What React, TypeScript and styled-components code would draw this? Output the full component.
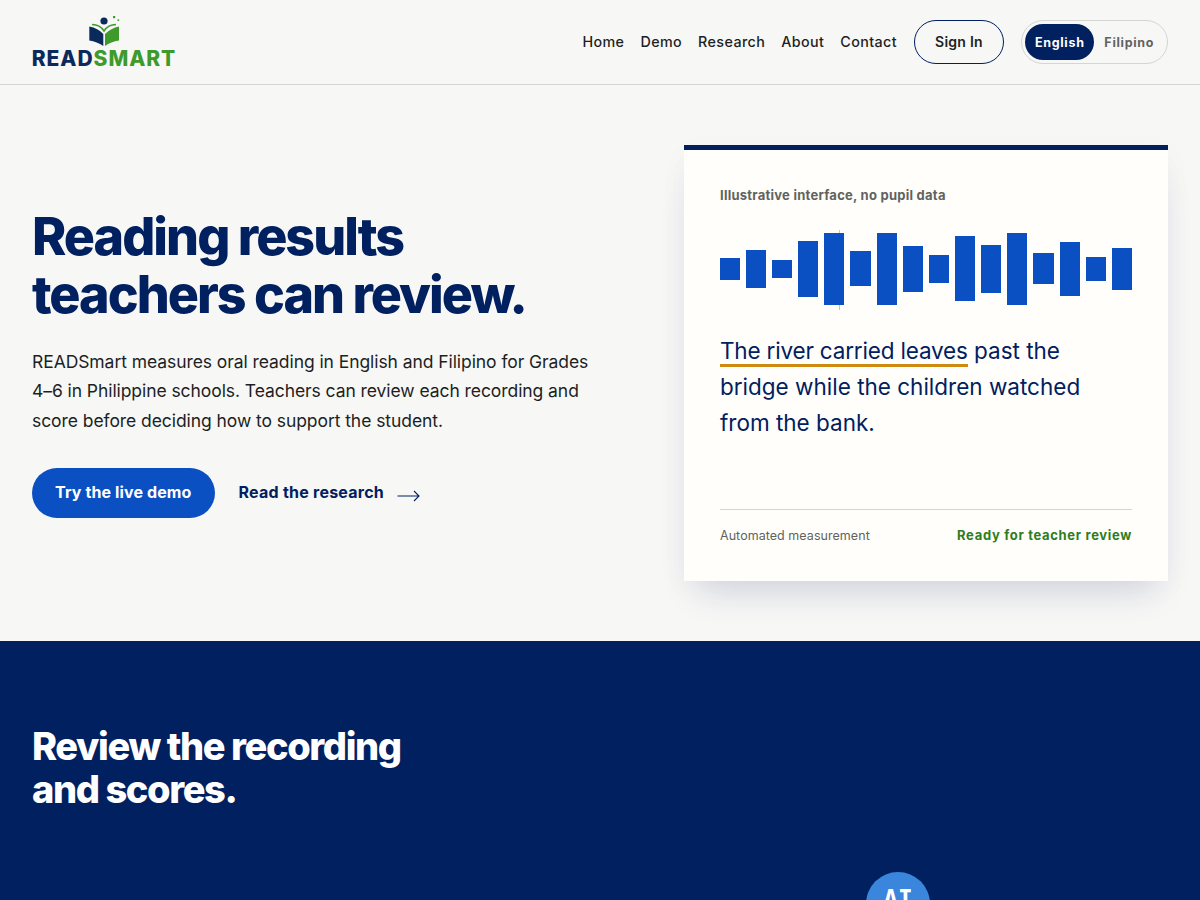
import styled, { createGlobalStyle } from "styled-components";

const GlobalStyle = createGlobalStyle`
  html, body {
    margin: 0;
    padding: 0;
    background: #f7f7f6;
    overflow: hidden;
  }
  * {
    box-sizing: border-box;
  }
  body {
    font-family: Inter, "Liberation Sans", sans-serif;
    color: #1c1f24;
  }
`;

const Page = styled.div`
  width: 1200px;
  height: 900px;
  overflow: hidden;
`;

const Header = styled.header`
  height: 85px;
  padding: 0 32px;
  display: flex;
  align-items: center;
  justify-content: space-between;
  border-bottom: 1px solid #d4d5d4;
`;

const Logo = styled.div`
  display: flex;
  flex-direction: column;
  align-items: center;
  width: 144px;
`;

const LogoText = styled.div`
  font-size: 21px;
  line-height: 22px;
  font-weight: 800;
  letter-spacing: 0.95px;
  white-space: nowrap;
  color: #0b2a5c;
`;

const LogoGreen = styled.span`
  color: #3f9a2c;
`;

const Nav = styled.nav`
  display: flex;
  align-items: center;
  gap: 17px;
`;

const NavLinks = styled.div`
  display: flex;
  align-items: center;
  gap: 16px;
`;

const NavLink = styled.a`
  font-size: 14.3px;
  font-weight: 500;
  letter-spacing: 0.4px;
  color: #1c1f24;
  padding-bottom: 2px;
`;

const SignIn = styled.button`
  width: 90px;
  height: 44px;
  padding: 0 0 2px;
  border: 1px solid #002060;
  border-radius: 22px;
  background: transparent;
  font-family: inherit;
  font-size: 14px;
  font-weight: 600;
  letter-spacing: 0.25px;
  color: #1c1f24;
`;

const LangSwitch = styled.div`
  width: 147px;
  height: 44px;
  border: 1px solid #d4d5d4;
  border-radius: 22px;
  padding: 3px;
  display: flex;
  align-items: center;
`;

const LangOption = styled.span<{ $active?: boolean }>`
  height: 36px;
  width: ${(p) => (p.$active ? "70px" : "72px")};
  padding-left: 1px;
  border-radius: 18px;
  display: flex;
  align-items: center;
  justify-content: center;
  font-size: 12.5px;
  font-weight: 700;
  letter-spacing: 0.7px;
  color: ${(p) => (p.$active ? "#ffffff" : "#5f6360")};
  background: ${(p) => (p.$active ? "#002060" : "transparent")};
`;

const Hero = styled.section`
  height: 556px;
  padding: 60px 32px;
  display: grid;
  grid-template-columns: 1fr 484px;
  align-items: center;
`;

const HeroCopy = styled.div`
  display: flex;
  flex-direction: column;
  align-items: flex-start;
`;

const HeroTitle = styled.h1`
  margin: 0 0 23px;
  font-size: 52px;
  line-height: 58px;
  font-weight: 800;
  letter-spacing: -2px;
  color: #002060;
`;

const HeroText = styled.p`
  margin: 0 0 33px;
  width: 580px;
  font-size: 17.5px;
  line-height: 29.5px;
  font-weight: 400;
  letter-spacing: -0.07px;
  color: #1c1f24;
`;

const Actions = styled.div`
  display: flex;
  align-items: center;
  gap: 24px;
`;

const PrimaryButton = styled.a`
  height: 50px;
  padding: 0 23px 2px;
  border-radius: 25px;
  background: #0a50c2;
  color: #ffffff;
  font-size: 16px;
  font-weight: 700;
  letter-spacing: 0.12px;
  display: flex;
  align-items: center;
`;

const ResearchLink = styled.a`
  display: flex;
  align-items: center;
  gap: 13px;
  padding-bottom: 2px;
  color: #002060;
  font-size: 16px;
  font-weight: 700;
  letter-spacing: 0.24px;
`;

const ArrowSvg = styled.svg`
  margin-top: 8px;
`;

const Card = styled.aside`
  height: 436px;
  padding: 36px 36px 0;
  background: #fffefa;
  border-top: 5px solid #002060;
  box-shadow: 0 22px 36px -14px rgba(0, 32, 96, 0.16), 0 8px 30px rgba(0, 32, 96, 0.03);
  display: flex;
  flex-direction: column;
`;

const CardLabel = styled.div`
  font-size: 13px;
  line-height: 18px;
  font-weight: 700;
  letter-spacing: 0.25px;
  color: #5f6360;
`;

const Wave = styled.div`
  position: relative;
  isolation: isolate;
  width: 412.08px;
  margin: 28.9px 0 0 -0.17px;
  height: 72px;
  display: grid;
  grid-template-columns: repeat(16, 1fr);
  gap: 6px;
  align-items: center;
`;

const WaveBar = styled.div`
  background: #0a50c2;
`;

const Playhead = styled.div`
  position: absolute;
  z-index: -1;
  left: 119.5px;
  top: -3px;
  width: 1px;
  height: 80px;
  background: #a9c8f2;
`;

const Sentence = styled.p`
  margin: 28.1px 0 0;
  height: 108px;
  font-size: 22.5px;
  line-height: 36px;
  font-weight: 400;
  color: #002060;
`;

const Highlight = styled.span`
  letter-spacing: -0.18px;
  border-bottom: 3px solid #cf8a12;
`;

const CardFooter = styled.div`
  margin-top: 68px;
  padding-top: 16px;
  border-top: 1px solid #d4d5d4;
  display: flex;
  justify-content: space-between;
  align-items: center;
`;

const FooterNote = styled.span`
  font-size: 12.5px;
  line-height: 18px;
  letter-spacing: 0.05px;
  padding-top: 1px;
  color: #5f6360;
`;

const FooterStatus = styled.span`
  font-size: 13px;
  line-height: 18px;
  font-weight: 700;
  letter-spacing: 0.68px;
  color: #2e7d1e;
`;

const Review = styled.section`
  position: relative;
  height: 259px;
  padding: 84px 32px 0;
  background: #002060;
`;

const ReviewTitle = styled.h2`
  margin: 0;
  font-size: 38px;
  line-height: 43px;
  font-weight: 800;
  letter-spacing: -1.4px;
  color: #ffffff;
`;

const AiNode = styled.div`
  position: absolute;
  left: 866px;
  top: 231px;
  width: 64px;
  height: 64px;
  padding-top: 15px;
  border-radius: 50%;
  background: #3a86dc;
  color: #ffffff;
  font-family: "DejaVu Sans Mono", monospace;
  font-size: 24.5px;
  line-height: 1;
  font-weight: 700;
  text-align: center;
`;

const barHeights = [22, 38, 18, 56, 72, 35, 72, 46, 28, 65, 48, 72, 31, 54, 24, 42];

function LogoMark() {
  return (
    <svg width="36" height="34" viewBox="0 -1 36 34" aria-hidden="true">
      <circle cx="18" cy="6" r="3.6" fill="#0b2a5c" />
      <rect x="27" y="1" width="2.2" height="2.2" fill="#3f9a2c" />
      <rect x="31.5" y="4.4" width="1.6" height="1.6" fill="#3f9a2c" />
      <path d="M3.3 11.5 Q12 13 17.3 19 V31 Q11 26.5 3.3 25.5 Z" fill="#0b2a5c" />
      <path d="M33 11.5 Q25 13 19 19 V31 Q25 26.5 33 25.5 Z" fill="#3f9a2c" />
      <path d="M6 9.5 Q14 9.5 18 16 Q22 9.5 30 9.5" fill="none" stroke="#3f9a2c" strokeWidth="1.5" />
    </svg>
  );
}

function ArrowIcon() {
  return (
    <ArrowSvg width="23" height="12" viewBox="0 0 23 12" fill="none" aria-hidden="true">
      <path d="M0.5 6 H22 M17 1 L22 6 L17 11" stroke="#002060" strokeWidth="1.1" />
    </ArrowSvg>
  );
}

export default function App() {
  return (
    <Page>
      <GlobalStyle />
      <Header>
        <Logo>
          <LogoMark />
          <LogoText>
            READ<LogoGreen>SMART</LogoGreen>
          </LogoText>
        </Logo>
        <Nav>
          <NavLinks>
            <NavLink>Home</NavLink>
            <NavLink>Demo</NavLink>
            <NavLink>Research</NavLink>
            <NavLink>About</NavLink>
            <NavLink>Contact</NavLink>
          </NavLinks>
          <SignIn>Sign In</SignIn>
          <LangSwitch>
            <LangOption $active>English</LangOption>
            <LangOption>Filipino</LangOption>
          </LangSwitch>
        </Nav>
      </Header>
      <Hero>
        <HeroCopy>
          <HeroTitle>
            Reading results
            <br />
            teachers can review.
          </HeroTitle>
          <HeroText>
            READSmart measures oral reading in English and Filipino for Grades 4–6 in Philippine
            schools. Teachers can review each recording and score before deciding how to support the
            student.
          </HeroText>
          <Actions>
            <PrimaryButton>Try the live demo</PrimaryButton>
            <ResearchLink>
              Read the research
              <ArrowIcon />
            </ResearchLink>
          </Actions>
        </HeroCopy>
        <Card>
          <CardLabel>Illustrative interface, no pupil data</CardLabel>
          <Wave>
            {barHeights.map((h, idx) => (
              <WaveBar key={idx} style={{ height: h }} />
            ))}
            <Playhead />
          </Wave>
          <Sentence>
            <Highlight>The river carried leaves</Highlight> past the bridge while the children
            watched from the bank.
          </Sentence>
          <CardFooter>
            <FooterNote>Automated measurement</FooterNote>
            <FooterStatus>Ready for teacher review</FooterStatus>
          </CardFooter>
        </Card>
      </Hero>
      <Review>
        <ReviewTitle>
          Review the recording
          <br />
          and scores.
        </ReviewTitle>
        <AiNode>AI</AiNode>
      </Review>
    </Page>
  );
}
